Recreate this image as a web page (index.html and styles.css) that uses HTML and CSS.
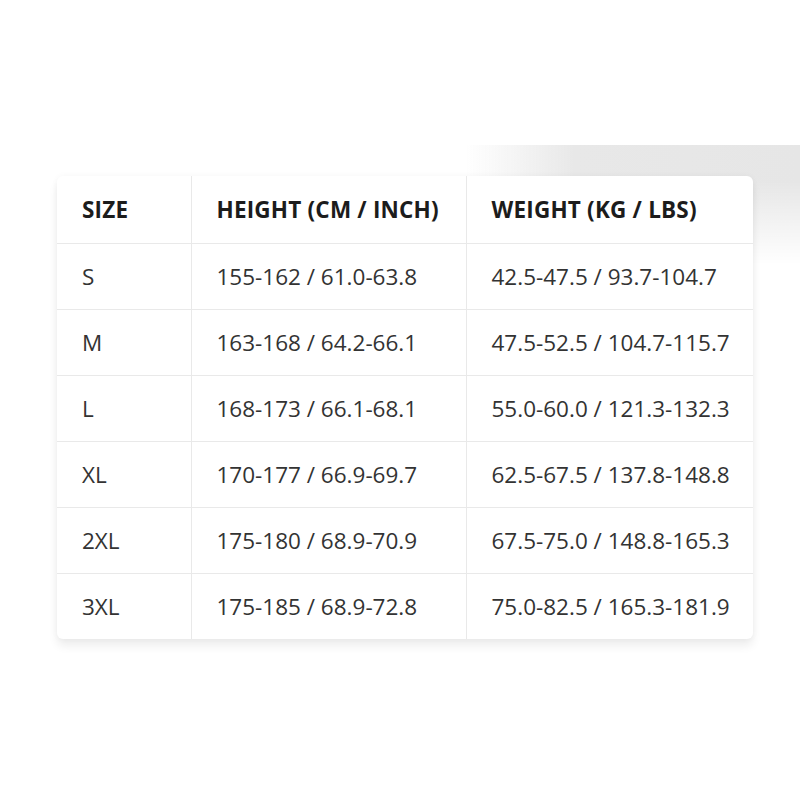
FILE: index.html
```html
<!DOCTYPE html>
<html lang="en">
<head>
<meta charset="utf-8">
<title>Size chart</title>
<link rel="stylesheet" href="styles.css">
</head>
<body>
<div class="stage">
  <div class="glow"></div>
  <div class="card">
    <table class="chart">
      <colgroup>
        <col class="c-size">
        <col class="c-height">
        <col class="c-weight">
      </colgroup>
      <thead>
        <tr><th>SIZE</th><th>HEIGHT (CM / INCH)</th><th>WEIGHT (KG / LBS)</th></tr>
      </thead>
      <tbody>
        <tr><td>S</td><td>155-162 / 61.0-63.8</td><td>42.5-47.5 / 93.7-104.7</td></tr>
        <tr><td>M</td><td>163-168 / 64.2-66.1</td><td>47.5-52.5 / 104.7-115.7</td></tr>
        <tr><td>L</td><td>168-173 / 66.1-68.1</td><td>55.0-60.0 / 121.3-132.3</td></tr>
        <tr><td>XL</td><td>170-177 / 66.9-69.7</td><td>62.5-67.5 / 137.8-148.8</td></tr>
        <tr><td>2XL</td><td>175-180 / 68.9-70.9</td><td>67.5-75.0 / 148.8-165.3</td></tr>
        <tr><td>3XL</td><td>175-185 / 68.9-72.8</td><td>75.0-82.5 / 165.3-181.9</td></tr>
      </tbody>
    </table>
  </div>
</div>
</body>
</html>
```
FILE: styles.css
```css
html, body {
  margin: 0;
  padding: 0;
  background: #ffffff;
}
body {
  font-family: "Open Sans", "Noto Sans", "Liberation Sans", sans-serif;
  color: #333333;
}
.stage {
  position: relative;
  width: 800px;
  height: 800px;
  padding: 176px 0 0 57px;
  box-sizing: border-box;
  overflow: hidden;
}
.glow {
  position: absolute;
  top: 145px;
  left: 465px;
  right: 0;
  height: 120px;
  background: linear-gradient(to right, rgba(231,231,231,0) 0, #e8e8e8 110px, #e6e6e6 100%);
  -webkit-mask-image: linear-gradient(to bottom, #000 0, #000 30%, transparent 100%);
  mask-image: linear-gradient(to bottom, #000 0, #000 30%, transparent 100%);
}
.card {
  position: relative;
  width: 696px;
  background: #ffffff;
  border-radius: 6px;
  box-shadow: 0 7px 10px rgba(0,0,0,0.07), 0 0 6px rgba(0,0,0,0.04);
  overflow: hidden;
}
.chart {
  width: 100%;
  border-collapse: collapse;
  table-layout: fixed;
}
.c-size { width: 134px; }
.c-height { width: 275px; }
.c-weight { width: 287px; }
.chart th, .chart td {
  height: 66px;
  padding: 0 0 0 25px;
  text-align: left;
  vertical-align: middle;
  white-space: nowrap;
  border-bottom: 1px solid #e9e9e9;
  border-right: 1px solid #e9e9e9;
  box-sizing: border-box;
}
.chart th {
  height: 67px;
  font-size: 22.5px;
  font-weight: 700;
  color: #1c1c1c;
  letter-spacing: 0.2px;
}
.chart td {
  font-size: 22.5px;
  font-weight: 400;
  color: #333333;
}
.chart tr > :last-child { border-right: none; }
.chart tbody tr:last-child td { border-bottom: none; }
```
